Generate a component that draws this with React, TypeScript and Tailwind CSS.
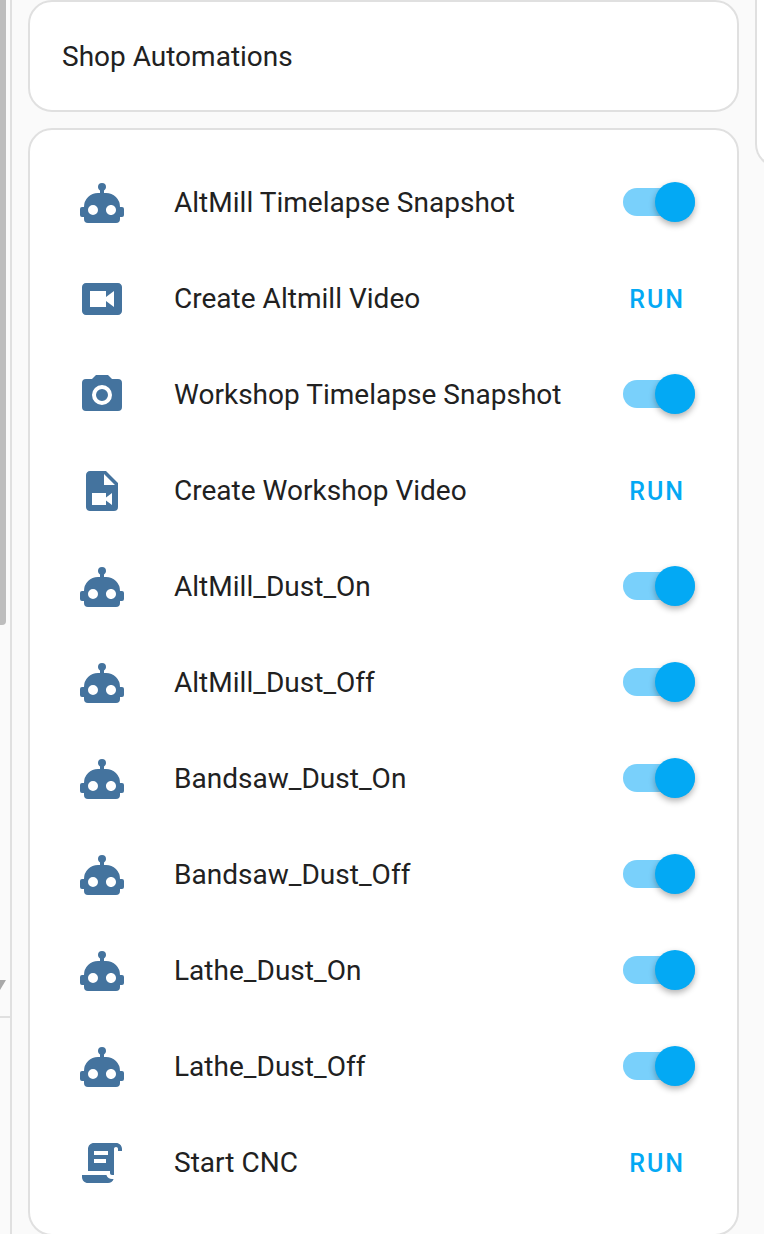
const robot =
  "M12,2A2,2 0 0,1 14,4C14,4.74 13.6,5.39 13,5.73V7H14A7,7 0 0,1 21,14H22A1,1 0 0,1 23,15V18A1,1 0 0,1 22,19H21V20A2,2 0 0,1 19,22H5A2,2 0 0,1 3,20V19H2A1,1 0 0,1 1,18V15A1,1 0 0,1 2,14H3A7,7 0 0,1 10,7H11V5.73C10.4,5.39 10,4.74 10,4A2,2 0 0,1 12,2M7.5,13A2.5,2.5 0 0,0 5,15.5A2.5,2.5 0 0,0 7.5,18A2.5,2.5 0 0,0 10,15.5A2.5,2.5 0 0,0 7.5,13M16.5,13C15.12,13 14,14.12 14,15.5C14,16.88 15.12,18 16.5,18C17.88,18 19,16.88 19,15.5C19,14.12 17.88,13 16.5,13Z";
const videoBox =
  "M20,4H4C2.9,4 2,4.9 2,6V18C2,19.1 2.9,20 4,20H20C21.1,20 22,19.1 22,18V6C22,4.9 21.1,4 20,4M18,16L14,13V16H6V8H14V11L18,8V16Z";
const camera =
  "M4,4H7L9,2H15L17,4H20A2,2 0 0,1 22,6V18A2,2 0 0,1 20,20H4A2,2 0 0,1 2,18V6A2,2 0 0,1 4,4M12,7A5,5 0 0,0 7,12A5,5 0 0,0 12,17A5,5 0 0,0 17,12A5,5 0 0,0 12,7M12,9A3,3 0 0,1 15,12A3,3 0 0,1 12,15A3,3 0 0,1 9,12A3,3 0 0,1 12,9Z";
const fileVideo =
  "M13,9H18.5L13,3.5V9M6,2H14L20,8V20A2,2 0 0,1 18,22H6C4.89,22 4,21.1 4,20V4C4,2.89 4.89,2 6,2M17,19V13L14,15.2V13H7V19H14V16.8L17,19Z";
const script =
  "M17.8,20C17.4,21.2 16.3,22 15,22H5C3.3,22 2,20.7 2,19V18H5L14.2,18C14.6,19.2 15.7,20 17,20H17.8M19,2C20.7,2 22,3.3 22,5V6H20V5C20,4.4 19.6,4 19,4C18.4,4 18,4.4 18,5V18H17C16.4,18 16,17.6 16,17V16H5V5C5,3.3 6.3,2 8,2H19M8,6V8H15V6H8M8,10V12H14V10H8Z";

type Row = { icon: string; name: string; action: "toggle" | "run" };

const rows: Row[] = [
  { icon: robot, name: "AltMill Timelapse Snapshot", action: "toggle" },
  { icon: videoBox, name: "Create Altmill Video", action: "run" },
  { icon: camera, name: "Workshop Timelapse Snapshot", action: "toggle" },
  { icon: fileVideo, name: "Create Workshop Video", action: "run" },
  { icon: robot, name: "AltMill_Dust_On", action: "toggle" },
  { icon: robot, name: "AltMill_Dust_Off", action: "toggle" },
  { icon: robot, name: "Bandsaw_Dust_On", action: "toggle" },
  { icon: robot, name: "Bandsaw_Dust_Off", action: "toggle" },
  { icon: robot, name: "Lathe_Dust_On", action: "toggle" },
  { icon: robot, name: "Lathe_Dust_Off", action: "toggle" },
  { icon: script, name: "Start CNC", action: "run" },
];

function Toggle() {
  return (
    <div className="relative h-7 w-[72px] rounded-full bg-[#79d0fb]">
      <div className="absolute right-0 top-[-6px] h-10 w-10 rounded-full bg-[#03a9f4] shadow-[0_3px_6px_rgba(0,0,0,0.3)]" />
    </div>
  );
}

export default function App() {
  return (
    <div className="flex h-[1234px] w-[764px] overflow-hidden bg-[#fafafa] font-['Roboto',sans-serif] text-[#212121]">
      <div className="flex w-[12px] shrink-0 flex-col border-r-2 border-[#e0e0e0] bg-[#fafafa]">
        <div className="h-[625px] w-[6px] rounded-br-[4px] bg-[#bdbdbd]" />
        <div className="mt-[355px] h-0 w-0 border-r-[6px] border-t-[10px] border-r-transparent border-t-[#a8a8a8]" />
        <div className="mt-[26px] h-[2px] w-[10px] bg-[#e0e0e0]" />
      </div>

      <div className="ml-4 flex w-[711px] shrink-0 flex-col gap-4">
        <div className="flex h-[112px] shrink-0 items-center rounded-[24px] border-2 border-[#e0e0e0] bg-white pl-8">
          <span className="pt-[2px] text-[28px]">Shop Automations</span>
        </div>
        <div className="h-[1108px] shrink-0 rounded-[24px] border-2 border-[#e0e0e0] bg-white pt-6">
          {rows.map((row, i) => (
            <div key={i} className="flex h-24 items-center pl-12 pr-[42px]">
              <svg viewBox="0 0 24 24" className="mt-[2px] h-12 w-12 shrink-0 fill-[#44739e]">
                <path d={row.icon} />
              </svg>
              <span className="ml-12 flex-1 pt-[2px] text-[28px] tracking-[0.02px]">{row.name}</span>
              {row.action === "toggle" ? (
                <Toggle />
              ) : (
                <button type="button" className="mr-[10px] pt-[4px] text-[25px] font-medium tracking-[2px] text-[#03a9f4]">
                  RUN
                </button>
              )}
            </div>
          ))}
        </div>
      </div>

      <div className="ml-4 h-[168px] w-[24px] shrink-0 rounded-bl-[24px] border-b-2 border-l-2 border-[#e0e0e0] bg-white" />
    </div>
  );
}
